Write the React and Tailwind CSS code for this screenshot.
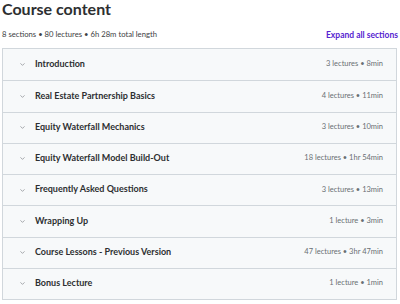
import { ChevronDown } from "lucide-react";

const sections = [
  { title: "Introduction", meta: "3 lectures • 8min" },
  { title: "Real Estate Partnership Basics", meta: "4 lectures • 11min" },
  { title: "Equity Waterfall Mechanics", meta: "3 lectures • 10min" },
  { title: "Equity Waterfall Model Build-Out", meta: "18 lectures • 1hr 54min" },
  { title: "Frequently Asked Questions", meta: "3 lectures • 13min" },
  { title: "Wrapping Up", meta: "1 lecture • 3min" },
  { title: "Course Lessons - Previous Version", meta: "47 lectures • 3hr 47min" },
  { title: "Bonus Lecture", meta: "1 lecture • 1min" },
];

export default function App() {
  return (
    <div className="w-[400px] h-[304px] bg-white overflow-hidden px-[2px] font-['Lato','Liberation_Sans',sans-serif] text-[#2d2f31]">
      <h2 className="text-[16px] leading-[18px] font-bold">Course content</h2>

      <div className="flex items-center justify-between mt-[11px] h-[12px]">
        <span className="text-[7.7px] text-[#3e4143]">8 sections • 80 lectures • 6h 28m total length</span>
        <button className="text-[8.5px] font-bold text-[#5624d0]">Expand all sections</button>
      </div>

      <div className="mt-[7px] w-[395px] border border-[#d1d7dc]">
        {sections.map((s, i) => (
          <div
            key={i}
            className={
              "flex items-center h-[31.25px] bg-[#f7f9fa] pl-[16px] pr-[13px] " +
              (i > 0 ? "border-t border-[#d1d7dc]" : "")
            }
          >
            <ChevronDown className="w-[7px] h-[7px] text-[#6a6f73] mr-[9px]" strokeWidth={2} />
            <span className="text-[9px] font-bold flex-1 -mt-[2px]">{s.title}</span>
            <span className="text-[7.5px] text-[#6a6f73] -mt-[2px]">{s.meta}</span>
          </div>
        ))}
      </div>
    </div>
  );
}
